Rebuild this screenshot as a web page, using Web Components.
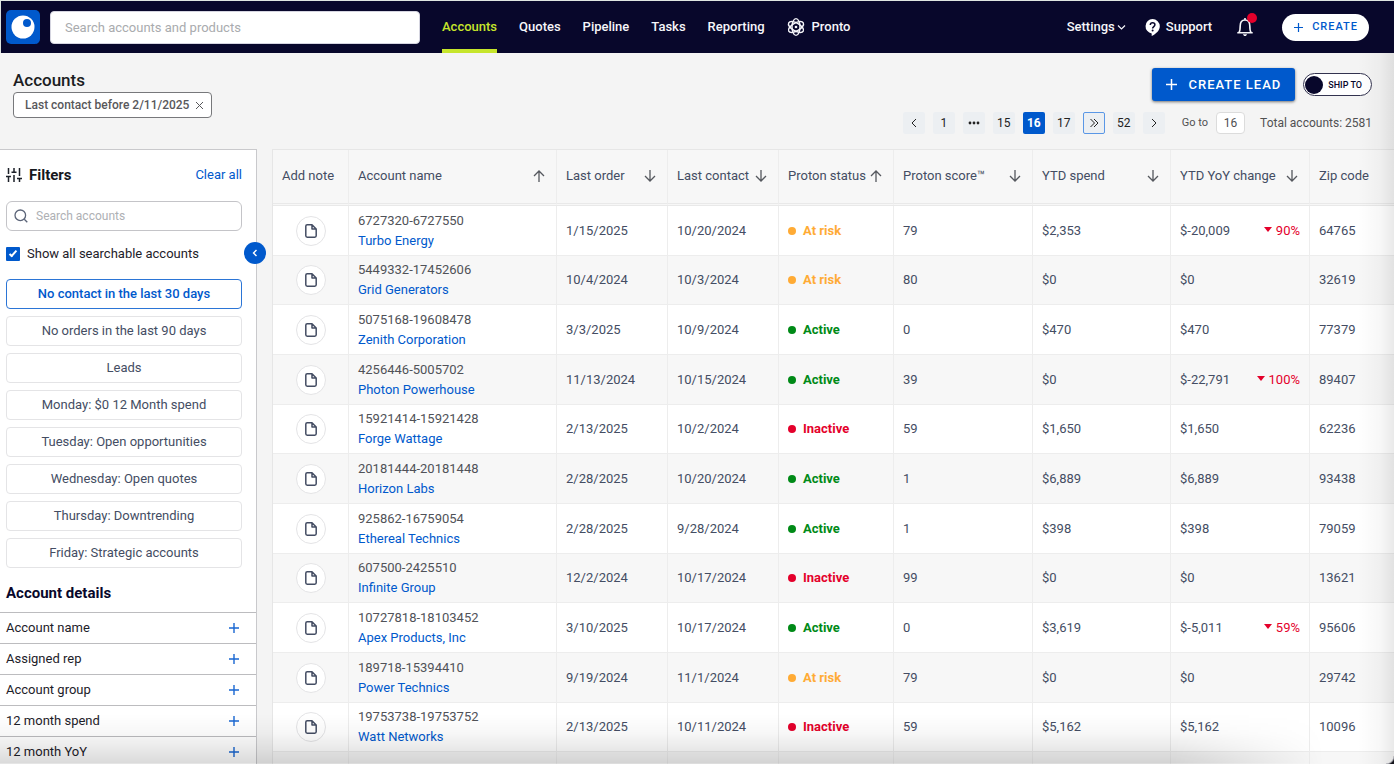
<!DOCTYPE html>
<html lang="en">
<head>
<meta charset="utf-8">
<meta name="viewport" content="width=device-width, initial-scale=1">
<title>Accounts</title>
<style>
  :root {
    --blue: #0059cc;
    --navy: #08072b;
    --slate: #444d63;
    --line: #ededed;
  }
  body {
    margin: 0;
    font: 13px/20px Roboto, sans-serif;
    color: #1d2129;
    background: #f4f4f4;
  }
</style>
</head>
<body>
<accounts-app></accounts-app>

<script>
const define = (name, html, setup) => {
  const template = document.createElement('template');
  template.innerHTML = `<style>
    *, *::before, *::after { box-sizing: border-box; }
    button, input { font: inherit; color: inherit; margin: 0; }
    button { padding: 0; border: 0; background: none; cursor: pointer; }
    a { color: inherit; text-decoration: none; }
    svg { display: block; flex: none; }
    svg:not([stroke]) { fill: none; stroke: currentColor; }
  </style>` + html;
  customElements.define(name, class extends HTMLElement {
    constructor() {
      super();
      this.attachShadow({ mode: 'open' }).append(template.content.cloneNode(true));
      if (setup) setup(this.shadowRoot, this);
    }
  });
};

define('app-header', `<style>
  :host { display: flex; align-items: center; box-sizing: border-box; height: 53px; flex: none; padding: 0 25px 0 5px;
    background: var(--navy); color: #f6f6fa; border: solid #dfe5e1; border-width: 1px 0 0 1px; font-weight: 500; }
  .search { width: 370px; height: 33px; margin-left: 10px; padding: 0 14px; border: 1px solid #d5d5e0;
    border-radius: 4px; background: #fff; color: #222; font-weight: 400; outline: 0; }
  .search::placeholder { color: #a9abae; opacity: 1; }
  nav { display: flex; align-self: stretch; gap: 22px; margin-left: 22px; }
  nav a { display: flex; align-items: center; gap: 7px; border: solid transparent; border-width: 4px 0; }
  nav a[aria-current] { color: #c6e52b; border-bottom-color: #c6e52b; }
  .right { display: flex; align-items: center; margin-left: auto; }
  .settings { display: flex; align-items: center; gap: 2px; }
  .support { display: flex; align-items: center; gap: 6px; margin-left: 19px; }
  .bell { position: relative; margin-left: 24px; }
  .bell::before { content: ""; position: absolute; right: -3px; top: -4px; width: 10px; height: 10px;
    border-radius: 50%; background: #e4002b; }
  .create { display: flex; align-items: center; gap: 9px; height: 27px; margin-left: 28px; padding: 0 11px 0 12px;
    border-radius: 14px; background: #fff; color: var(--blue); font-size: 11px; letter-spacing: 1px; }
</style>
<a href="#" aria-label="Home"><svg width="34" height="34" viewBox="0 0 34 34" stroke="none">
  <rect width="34" height="34" rx="5" fill="#0059cc"/><circle cx="17" cy="17" r="11.5" fill="#fff"/><circle cx="21" cy="13" r="4" fill="#0059cc"/></svg></a>
<input class="search" type="search" aria-label="Search accounts and products" placeholder="Search accounts and products">
<nav>
  <a href="#" aria-current="page">Accounts</a>
  <a href="#">Quotes</a>
  <a href="#">Pipeline</a>
  <a href="#">Tasks</a>
  <a href="#">Reporting</a>
  <a href="#"><svg width="18" height="20" viewBox="0 0 18 20" stroke-width="1.4">
    <ellipse cx="9" cy="10" rx="4" ry="8.4"/><ellipse cx="9" cy="10" rx="4" ry="8.4" transform="rotate(60 9 10)"/>
    <ellipse cx="9" cy="10" rx="4" ry="8.4" transform="rotate(120 9 10)"/><circle cx="9" cy="10" r="1.3" fill="currentColor" stroke="none"/></svg>Pronto</a>
</nav>
<div class="right">
  <button class="settings">Settings<svg width="9" height="9" viewBox="0 0 9 9" stroke-width="1.2"><path d="M1 2.5 4.5 6 8 2.5"/></svg></button>
  <a class="support" href="#"><svg width="15" height="17" viewBox="0 0 15 17" stroke="none">
    <path fill="#fff" d="M7.5 0a7.3 7.3 0 0 0-.8 14.5V17C11 15 14.8 11.5 14.8 7.3A7.3 7.3 0 0 0 7.5 0z"/>
    <path d="M5.3 5.9c0-3 4.6-2.9 4.6-.1 0 1.7-2.3 1.9-2.3 3.7" fill="none" stroke="#08072b" stroke-width="1.5"/><circle cx="7.600" cy="11.600" r="1" fill="#08072b"/></svg>Support</a>
  <button class="bell" aria-label="Notifications"><svg width="18" height="20" viewBox="0 0 18 20" stroke-width="1.600" stroke-linejoin="round">
    <path d="M1.300 15.700h15.400M3 15.500c1-1.400 1.200-3 1.200-6.500C4.200 5.500 6 3 9 3s4.800 2.500 4.800 6c0 3.500.2 5.100 1.200 6.500M9 1v2"/><path d="M6.800 17.300h4.400L9.900 19H8.100z" fill="currentColor" stroke="none"/></svg></button>
  <button class="create"><svg width="9" height="9" viewBox="0 0 9 9" stroke-width="1.200"><path d="M4.500 0v9M0 4.500h9"/></svg>CREATE</button>
</div>`);

define('page-toolbar', `<style>
  :host { display: flex; justify-content: space-between; box-sizing: border-box; height: 96px; flex: none; padding: 15px 22px 0 13px; color: #505052; }
  h1 { margin: 0; font: 500 17px/24px Roboto, sans-serif; color: #1b1d22; }
  .chip { display: flex; align-items: center; gap: 6px; height: 26px; padding: 0 7px 0 11px; border: 1px solid #77787b;
    border-radius: 4px; background: #fff; font-size: 12px; font-weight: 500; color: #58585b; }
  .right { display: flex; flex-direction: column; align-items: flex-end; gap: 11px; }
  .actions { display: flex; align-items: center; gap: 8px; }
  .lead { display: flex; align-items: center; gap: 11px; height: 33px; padding: 0 14px; border-radius: 3px; background: var(--blue);
    color: #fff; font-size: 13px; font-weight: 500; letter-spacing: 1px; box-shadow: 0 1px 3px #0008; }
  .ship { display: flex; align-items: center; gap: 5px; height: 23px; padding: 0 9px 0 1px; border: 1px solid #33334f; border-radius: 12px;
    background: #fff; color: var(--navy); font-size: 9px; font-weight: 500; }
  .ship i { width: 18px; height: 18px; border-radius: 50%; background: var(--navy); }
  .pages { display: flex; align-items: center; gap: 8px; font-size: 12px; }
  .pages button { display: grid; place-items: center; width: 22px; height: 22px; border-radius: 2px; background: #eceff2; color: #222; }
  .pages button[aria-current] { background: var(--blue); color: #fff; font-weight: 700; }
  .pages .jump { border: 1px solid #5a97e6; }
  .pages label { display: flex; align-items: center; gap: 8px; margin-left: 9px; font-size: 11px; }
  .pages input { width: 29px; height: 22px; padding: 0; border: 1px solid #dcdcdc; border-radius: 4px; background: #fff; text-align: center; font-size: 12px; outline: 0; }
  .total { margin-left: 7px; }
</style>
<div>
  <h1>Accounts</h1>
  <button class="chip">Last contact before 2/11/2025<svg width="9" height="9" viewBox="0 0 9 9"><path d="m1 1 7 7M8 1 1 8"/></svg></button>
</div>
<div class="right">
  <div class="actions">
    <button class="lead"><svg width="11" height="11" viewBox="0 0 11 11" stroke-width="1.500"><path d="M5.500 0v11M0 5.500h11"/></svg>CREATE LEAD</button>
    <button class="ship" role="switch" aria-checked="false"><i></i>SHIP TO</button>
  </div>
  <div class="pages">
    <button aria-label="Previous page"><svg width="10" height="10" viewBox="0 0 10 10"><path d="M7 1 3 5l4 4"/></svg></button>
    <button>1</button>
    <button aria-label="Earlier pages"><svg width="12" height="4" viewBox="0 0 12 4" stroke="none" fill="currentColor"><circle cx="2" cy="2" r="1.400"/><circle cx="6" cy="2" r="1.400"/><circle cx="10" cy="2" r="1.400"/></svg></button>
    <button>15</button>
    <button aria-current="page">16</button>
    <button>17</button>
    <button class="jump" aria-label="Later pages"><svg width="10" height="10" viewBox="0 0 10 10"><path d="m1.500 1 4 4-4 4M5 1l4 4-4 4"/></svg></button>
    <button>52</button>
    <button aria-label="Next page"><svg width="10" height="10" viewBox="0 0 10 10"><path d="m3 1 4 4-4 4"/></svg></button>
    <label>Go to<input type="text" value="16"></label>
    <span class="total">Total accounts: 2581</span>
  </div>
</div>`);

define('filter-preset', `<style>
  :host { display: block; }
  button { width: 100%; height: 30px; border: 1px solid #e4e4e6; border-radius: 4px; background: #fff; color: var(--slate); }
  :host([selected]) button { border-color: #2b75d6; color: var(--blue); font-weight: 500; }
</style><button><slot></slot></button>`);

define('filter-group', `<style>
  :host { display: block; border-top: 1px solid #bcbcbf; }
  button { display: flex; align-items: center; justify-content: space-between; width: 100%; height: 30px; padding: 0 17px 0 6px; }
  svg { color: #1967d2; }
</style><button aria-expanded="false"><slot></slot><svg width="10" height="10" viewBox="0 0 10 10" stroke-width="1.400"><path d="M5 0v10M0 5h10"/></svg></button>`);

define('filter-panel', `<style>
  :host { display: block; box-sizing: border-box; position: relative; width: 257px; flex: none; background: #fff; border: solid #c9c9cc; border-width: 1px 1px 0 0; }
  .body { padding: 15px 14px 0 6px; }
  .head { display: flex; align-items: center; gap: 7px; }
  h2 { margin: 0; font: 700 15px/20px Roboto, sans-serif; color: #16181d; }
  .head a { margin-left: auto; color: var(--blue); }
  .find { display: flex; align-items: center; gap: 8px; height: 30px; margin: 16px 0 13px; padding: 0 7px; border: 1px solid #c4c4c8; border-radius: 6px; }
  .find svg { color: #5b6478; }
  .find input { flex: 1; min-width: 0; padding: 0; border: 0; outline: 0; background: none; font-size: 12px; }
  .find input::placeholder { color: #aeb0b4; opacity: 1; }
  .show { display: flex; align-items: center; gap: 7px; height: 20px; margin-bottom: 15px; }
  .show input { appearance: none; width: 14px; height: 14px; border-radius: 1px; display: grid; place-items: center; }
  .show input:checked { background: var(--blue); }
  .show input:checked::before { content: ""; width: 8px; height: 4px; margin-top: -2px; border: solid #fff; border-width: 0 0 2px 2px; transform: rotate(-48deg); }
  .presets { display: grid; gap: 7px; }
  h3 { margin: 0; padding: 15px 6px 9px; font: 700 15px/20px Roboto, sans-serif; color: var(--navy); }
  .clip { height: 100%; overflow: hidden; }
  .fold { position: absolute; right: -10px; top: 92px; width: 22px; height: 22px; border-radius: 50%; background: var(--blue); color: #fff; display: grid; place-items: center; }
</style>
<div class="clip">
  <div class="body">
    <div class="head"><svg width="16" height="16" viewBox="0 0 16 16" stroke-width="1.500"><path d="M2.500 1v6M2.500 10v5M0 9.500h5M8 1v4M8 8v7M5.500 5.200h5M13.500 1v8M13.500 12v3M11 11.500h5"/></svg>
      <h2>Filters</h2><a href="#">Clear all</a></div>
    <label class="find"><svg width="14" height="14" viewBox="0 0 14 14" stroke-width="1.300"><circle cx="6.300" cy="6.300" r="5.300"/><path d="m10.300 10.300 3 3"/></svg>
      <input type="search" aria-label="Search accounts" placeholder="Search accounts"></label>
    <label class="show"><input type="checkbox" checked>Show all searchable accounts</label>
    <div class="presets"></div>
  </div>
  <h3>Account details</h3>
  <div class="groups"></div>
</div>
<button class="fold" aria-label="Collapse filters"><svg width="8" height="8" viewBox="0 0 8 8" stroke-width="1.400"><path d="M5.500 1 2.500 4l3 3"/></svg></button>`,
root => {
  ['No contact in the last 30 days', 'No orders in the last 90 days', 'Leads', 'Monday: $0 12 Month spend', 'Tuesday: Open opportunities',
   'Wednesday: Open quotes', 'Thursday: Downtrending', 'Friday: Strategic accounts'].forEach((text, i) => {
    const preset = document.createElement('filter-preset');
    preset.textContent = text;
    preset.toggleAttribute('selected', i === 0);
    root.querySelector('.presets').append(preset);
  });
  ['Account name', 'Assigned rep', 'Account group', '12 month spend', '12 month YoY'].forEach(text => {
    const group = document.createElement('filter-group');
    group.textContent = text;
    root.querySelector('.groups').append(group);
  });
});

const COLUMNS = [
  ['Add note', 75], ['Account name', 208, 'up'], ['Last order', 111, 'down'], ['Last contact', 111, 'down'], ['Proton status', 115, 'up'],
  ['Proton score™', 139, 'down'], ['YTD spend', 138, 'down'], ['YTD YoY change', 139, 'down'], ['Zip code', 0]
];
const ROWS = [
  ['6727320-6727550', 'Turbo Energy', '1/15/2025', '10/20/2024', 'At risk', '79', '$2,353', '$-20,009', '90%', '64765'],
  ['5449332-17452606', 'Grid Generators', '10/4/2024', '10/3/2024', 'At risk', '80', '$0', '$0', '', '32619'],
  ['5075168-19608478', 'Zenith Corporation', '3/3/2025', '10/9/2024', 'Active', '0', '$470', '$470', '', '77379'],
  ['4256446-5005702', 'Photon Powerhouse', '11/13/2024', '10/15/2024', 'Active', '39', '$0', '$-22,791', '100%', '89407'],
  ['15921414-15921428', 'Forge Wattage', '2/13/2025', '10/2/2024', 'Inactive', '59', '$1,650', '$1,650', '', '62236'],
  ['20181444-20181448', 'Horizon Labs', '2/28/2025', '10/20/2024', 'Active', '1', '$6,889', '$6,889', '', '93438'],
  ['925862-16759054', 'Ethereal Technics', '2/28/2025', '9/28/2024', 'Active', '1', '$398', '$398', '', '79059'],
  ['607500-2425510', 'Infinite Group', '12/2/2024', '10/17/2024', 'Inactive', '99', '$0', '$0', '', '13621'],
  ['10727818-18103452', 'Apex Products, Inc', '3/10/2025', '10/17/2024', 'Active', '0', '$3,619', '$-5,011', '59%', '95606'],
  ['189718-15394410', 'Power Technics', '9/19/2024', '11/1/2024', 'At risk', '79', '$0', '$0', '', '29742'],
  ['19753738-19753752', 'Watt Networks', '2/13/2025', '10/11/2024', 'Inactive', '59', '$5,162', '$5,162', '', '10096']
];

define('account-status', `<style>
  :host { display: flex; align-items: center; gap: 7px; font-weight: 700; color: #008a17; }
  :host([level="At risk"]) { color: #ffab35; }
  :host([level="Inactive"]) { color: #e4002b; }
  i { width: 8px; height: 8px; border-radius: 50%; background: currentColor; }
</style><i></i><slot></slot>`);

define('note-button', `<style>
  :host { display: grid; place-items: center; }
  button { display: grid; place-items: center; width: 30px; height: 30px; border: 1px solid #e4e4e6; border-radius: 50%; background: #fff; color: var(--slate); }
</style><button aria-label="Add note"><svg width="12" height="14" viewBox="0 0 12 14" stroke-width="1.500" stroke-linejoin="round">
  <path d="M7 .8H2.200Q.8.800.8 2.200v9.600q0 1.400 1.400 1.400h7.600q1.400 0 1.400-1.400V5zV5h4.200"/></svg></button>`);

define('accounts-table', `<style>
  :host { display: block; flex: 1; min-width: 0; overflow: hidden; color: var(--slate); border: solid #e6e6e6; border-width: 1px 0 0 1px; }
  table { width: 100%; table-layout: fixed; border-collapse: separate; border-spacing: 0; }
  th, td { padding: 0 9px; border: solid var(--line); border-width: 0 0 1px 1px; text-align: left; font-weight: 400; white-space: nowrap; }
  th:first-child, td:first-child { border-left: 0; }
  th { height: 56px; padding: 0 11px 2px 9px; background: #f7f7f7; border-bottom: 3px double #e9e9e9; }
  th div, .change { display: flex; align-items: center; justify-content: space-between; }
  th button { color: #55585e; }
  tbody tr { height: 50px; background: #fff; }
  tbody tr:nth-child(3n+2) { height: 49px; }
  tbody tr:nth-child(even) { background: #f7f7f7; }
  .name { padding-block: 0; line-height: 20px; color: #505258; }
  .name a { display: block; color: var(--blue); }
  .down { display: flex; align-items: center; gap: 4px; color: #e4002b; }
  .down::before { content: ""; margin-bottom: 2px; border: solid transparent; border-width: 5px 4px 0; border-top-color: currentColor; }
</style>
<table><colgroup></colgroup><thead><tr></tr></thead><tbody></tbody></table>`,
root => {
  const arrows = { up: 'M6 12V1M1 6l5-5 5 5', down: 'M6 0v11M1 6l5 5 5-5' };
  root.querySelector('colgroup').innerHTML = COLUMNS.map(([, w]) => `<col${w ? ` style="width:${w}px"` : ''}>`).join('');
  root.querySelector('thead tr').innerHTML = COLUMNS.map(([label, , sort]) => `<th scope="col"><div>${label}${sort
    ? `<button aria-label="Sort by ${label}"><svg width="12" height="12" viewBox="0 0 12 12" stroke-width="1.300"><path d="${arrows[sort]}"/></svg></button>`
    : ''}</div></th>`).join('');
  root.querySelector('tbody').innerHTML = ROWS.map(([id, name, order, contact, status, score, spend, change, drop, zip]) => `<tr>
    <td><note-button></note-button></td><td class="name">${id}<a href="#">${name}</a></td><td>${order}</td><td>${contact}</td>
    <td><account-status level="${status}">${status}</account-status></td><td>${score}</td><td>${spend}</td>
    <td><div class="change">${change}${drop && `<span class="down">${drop}</span>`}</div></td><td>${zip}</td></tr>`).join('')
    + `<tr>${'<td></td>'.repeat(COLUMNS.length)}</tr>`;
});

define('accounts-app', `<style>
  :host { display: flex; flex-direction: column; height: 100vh; overflow: hidden; position: relative; }
  main { display: flex; flex: 1; min-height: 0; gap: 15px; }
  .shade { position: absolute; inset: 53px 0 0 0; pointer-events: none; background:
    linear-gradient(to left, #00000016, #00000008 14px, #0000 36px); }
  .shade::before { content: ""; position: absolute; inset: auto 0 0 0; height: 50px; border-bottom: 1px solid #0000001a;
    background: linear-gradient(#0000, #00000008 40%, #00000024);
    mask-image: linear-gradient(to right, #000 calc(100% - 220px), #0000 calc(100% - 70px)); }
  .shade::after { content: ""; position: absolute; right: 0; bottom: 0; width: 8px; height: 8px;
    background: radial-gradient(circle at 0 0, #0000 7px, #9a9aa2 8px, #15151c 9px); }
</style>
<app-header></app-header>
<page-toolbar></page-toolbar>
<main><filter-panel></filter-panel><accounts-table></accounts-table></main>
<div class="shade"></div>`);
</script>
</body>
</html>
